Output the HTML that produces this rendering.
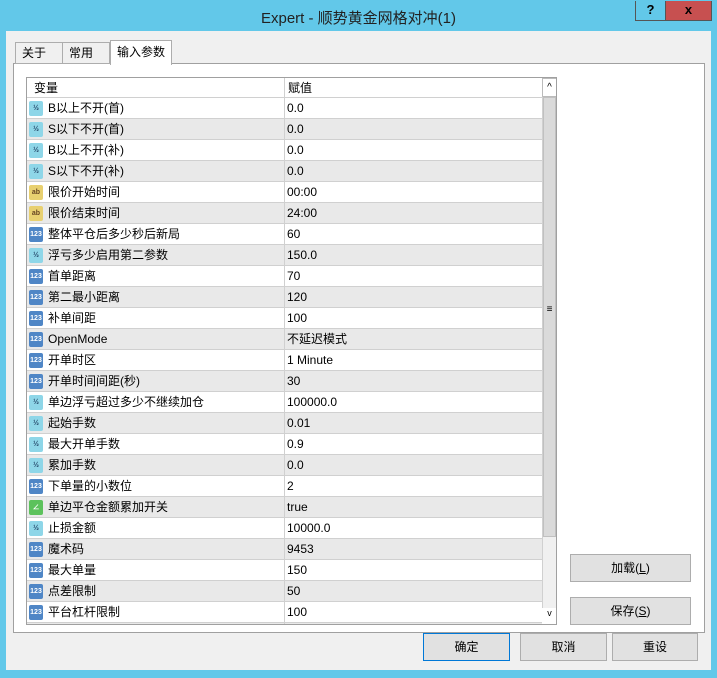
<!DOCTYPE html>
<html><head><meta charset="utf-8"><style>
*{box-sizing:border-box;margin:0;padding:0}
body{width:717px;height:678px;background:#62c8e9;font-family:"Liberation Sans","Noto Sans CJK SC",sans-serif;font-size:12px;color:#000;position:relative;overflow:hidden}
.abs{position:absolute}
#title{left:0;top:7px;width:717px;text-align:center;font-size:15px;color:#222}
#client{left:6px;top:31px;width:705px;height:639px;background:#f0f0f0}
.tab{position:absolute;top:42px;height:22px;border:1px solid #adadad;background:#f0f0f0;padding:0 0 0 6px;font-size:12px;white-space:nowrap;line-height:21px}
#panel{left:13px;top:63px;width:692px;height:570px;background:#fff;border:1px solid #a0a0a0}
#tbl{left:26px;top:77px;width:531px;height:548px;border:1px solid #a0a0a0;background:#fff;overflow:hidden}
.row{position:absolute;left:0;width:515px;height:21px;border-bottom:1px solid #d0d0d0}
.row.g{background:#e9e9e9}
.row span{position:absolute;top:0;height:20px;line-height:20px;white-space:nowrap}
.n{left:21px}.v{left:260px}
.row:before{content:"";position:absolute;left:257px;top:0;width:1px;height:21px;background:#d0d0d0}
.ic{position:absolute;left:2px;top:3px;width:14px;height:15px;border-radius:2px;font-size:7px;line-height:15px;text-align:center;color:#fff;font-weight:bold;font-style:normal}
.i1{background:#8ed6e8;color:#246}
.i2{background:#e8d070;color:#642}
.i3{background:#4f86c6}
.i4{background:#5cc25c}
.btn{position:absolute;background:#e1e1e1;border:1px solid #adadad;text-align:center;font-size:12px}
</style></head><body>
<div class="abs" id="title">Expert - 顺势黄金网格对冲(1)</div>
<div class="abs" style="left:635px;top:1px;width:31px;height:20px;border:1px solid #555;border-top:none;text-align:center;font-weight:bold;font-size:13px;line-height:18px">?</div>
<div class="abs" style="left:665px;top:1px;width:47px;height:20px;background:#c75050;border:1px solid #555;border-top:none;text-align:center;font-weight:bold;font-size:13px;line-height:18px">x</div>
<div class="abs" id="client"></div>
<div class="abs" id="panel"></div>
<div class="tab" style="left:15px;width:48px">关于</div>
<div class="tab" style="left:63px;width:47px;border-left:none">常用</div>
<div class="tab" style="left:110px;top:40px;height:25px;width:62px;background:#fff;border-bottom:none;line-height:22px">输入参数</div>
<div class="abs" id="tbl">
<div class="row" style="top:0;height:20px;background:#fff"><span style="left:7px">变量</span><span class="v" style="left:261px">赋值</span></div>
<div class="row" style="top:20px"><i class="ic i1">½</i><span class="n">B以上不开(首)</span><span class="v">0.0</span></div>
<div class="row g" style="top:41px"><i class="ic i1">½</i><span class="n">S以下不开(首)</span><span class="v">0.0</span></div>
<div class="row" style="top:62px"><i class="ic i1">½</i><span class="n">B以上不开(补)</span><span class="v">0.0</span></div>
<div class="row g" style="top:83px"><i class="ic i1">½</i><span class="n">S以下不开(补)</span><span class="v">0.0</span></div>
<div class="row" style="top:104px"><i class="ic i2">ab</i><span class="n">限价开始时间</span><span class="v">00:00</span></div>
<div class="row g" style="top:125px"><i class="ic i2">ab</i><span class="n">限价结束时间</span><span class="v">24:00</span></div>
<div class="row" style="top:146px"><i class="ic i3">123</i><span class="n">整体平仓后多少秒后新局</span><span class="v">60</span></div>
<div class="row g" style="top:167px"><i class="ic i1">½</i><span class="n">浮亏多少启用第二参数</span><span class="v">150.0</span></div>
<div class="row" style="top:188px"><i class="ic i3">123</i><span class="n">首单距离</span><span class="v">70</span></div>
<div class="row g" style="top:209px"><i class="ic i3">123</i><span class="n">第二最小距离</span><span class="v">120</span></div>
<div class="row" style="top:230px"><i class="ic i3">123</i><span class="n">补单间距</span><span class="v">100</span></div>
<div class="row g" style="top:251px"><i class="ic i3">123</i><span class="n">OpenMode</span><span class="v">不延迟模式</span></div>
<div class="row" style="top:272px"><i class="ic i3">123</i><span class="n">开单时区</span><span class="v">1 Minute</span></div>
<div class="row g" style="top:293px"><i class="ic i3">123</i><span class="n">开单时间间距(秒)</span><span class="v">30</span></div>
<div class="row" style="top:314px"><i class="ic i1">½</i><span class="n">单边浮亏超过多少不继续加仓</span><span class="v">100000.0</span></div>
<div class="row g" style="top:335px"><i class="ic i1">½</i><span class="n">起始手数</span><span class="v">0.01</span></div>
<div class="row" style="top:356px"><i class="ic i1">½</i><span class="n">最大开单手数</span><span class="v">0.9</span></div>
<div class="row g" style="top:377px"><i class="ic i1">½</i><span class="n">累加手数</span><span class="v">0.0</span></div>
<div class="row" style="top:398px"><i class="ic i3">123</i><span class="n">下单量的小数位</span><span class="v">2</span></div>
<div class="row g" style="top:419px"><i class="ic i4">∠</i><span class="n">单边平仓金额累加开关</span><span class="v">true</span></div>
<div class="row" style="top:440px"><i class="ic i1">½</i><span class="n">止损金额</span><span class="v">10000.0</span></div>
<div class="row g" style="top:461px"><i class="ic i3">123</i><span class="n">魔术码</span><span class="v">9453</span></div>
<div class="row" style="top:482px"><i class="ic i3">123</i><span class="n">最大单量</span><span class="v">150</span></div>
<div class="row g" style="top:503px"><i class="ic i3">123</i><span class="n">点差限制</span><span class="v">50</span></div>
<div class="row" style="top:524px"><i class="ic i3">123</i><span class="n">平台杠杆限制</span><span class="v">100</span></div>
<div class="row g" style="top:545px"><i class="ic i2"></i></div>
<div class="abs" style="left:515px;top:0;width:15px;height:548px;background:#f0f0f0;border-left:1px solid #d0d0d0"></div>
<div class="abs" style="left:515px;top:0;width:15px;height:19px;background:#fff;border:1px solid #bbb;text-align:center;font-size:10px;line-height:18px">^</div>
<div class="abs" style="left:516px;top:19px;width:13px;height:440px;background:#dadada;border:1px solid #c0c0c0;text-align:center;padding-top:210px;font-size:10px;line-height:4px">≡</div>
<div class="abs" style="left:515px;top:530px;width:15px;height:17px;background:#fff;text-align:center;font-size:9px">v</div>
</div>
<div class="btn" style="left:570px;top:554px;width:121px;height:28px;line-height:26px">加载(<u>L</u>)</div>
<div class="btn" style="left:570px;top:597px;width:121px;height:28px;line-height:26px">保存(<u>S</u>)</div>
<div class="btn" style="left:423px;top:633px;width:87px;height:28px;line-height:26px;border-color:#0078d7">确定</div>
<div class="btn" style="left:520px;top:633px;width:87px;height:28px;line-height:26px">取消</div>
<div class="btn" style="left:612px;top:633px;width:86px;height:28px;line-height:26px">重设</div>
</body></html>
